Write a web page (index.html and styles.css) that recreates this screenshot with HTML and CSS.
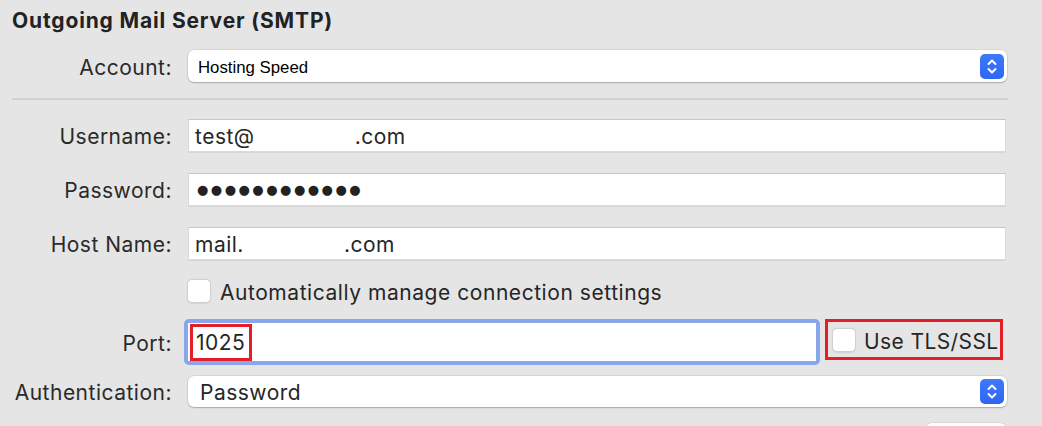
FILE: index.html
```html
<!DOCTYPE html>
<html>
<head>
<meta charset="utf-8">
<link rel="stylesheet" href="styles.css">
</head>
<body>
<div class="panel">
  <h1 class="title">Outgoing Mail Server (SMTP)</h1>

  <div class="row row-account">
    <label class="label">Account:</label>
    <div class="popup popup-small">
      <span class="popup-text">Hosting Speed</span>
      <span class="stepper">
        <svg width="12" height="17" viewBox="0 0 12 17"><path d="M2.5 6 L6 2.5 L9.5 6 M2.5 11 L6 14.5 L9.5 11" fill="none" stroke="#fff" stroke-width="2" stroke-linecap="round" stroke-linejoin="round"/></svg>
      </span>
    </div>
  </div>

  <div class="separator"></div>

  <div class="row row-field first">
    <label class="label">Username:</label>
    <div class="field"><span>test@</span><span class="blank w-user"></span><span>.com</span></div>
  </div>

  <div class="row row-field">
    <label class="label">Password:</label>
    <div class="field dots">●●●●●●●●●●●●</div>
  </div>

  <div class="row row-field">
    <label class="label">Host Name:</label>
    <div class="field"><span>mail.</span><span class="blank w-host"></span><span>.com</span></div>
  </div>

  <div class="row row-check">
    <span class="label"></span>
    <div class="check-line">
      <span class="checkbox"></span>
      <span class="check-text">Automatically manage connection settings</span>
    </div>
  </div>

  <div class="row row-port">
    <label class="label">Port:</label>
    <div class="port-ring">
      <div class="port-field"><span class="hl">1025</span></div>
    </div>
    <div class="tls">
      <span class="checkbox"></span>
      <span class="check-text">Use TLS/SSL</span>
    </div>
  </div>

  <div class="row row-auth">
    <label class="label">Authentication:</label>
    <div class="popup">
      <span class="popup-text big">Password</span>
      <span class="stepper">
        <svg width="12" height="17" viewBox="0 0 12 17"><path d="M2.5 6 L6 2.5 L9.5 6 M2.5 11 L6 14.5 L9.5 11" fill="none" stroke="#fff" stroke-width="2" stroke-linecap="round" stroke-linejoin="round"/></svg>
      </span>
    </div>
  </div>

  <div class="row row-buttons">
    <span class="button-stub"></span>
  </div>
</div>
</body>
</html>
```

FILE: styles.css
```css
html, body {
  margin: 0;
  padding: 0;
  background: #e5e5e5;
  overflow: hidden;
}

.panel {
  width: 1042px;
  height: 426px;
  box-sizing: border-box;
  padding: 9px 35px 0 12px;
  font-family: Inter, "Noto Sans", sans-serif;
  color: #262626;
  overflow: hidden;
}

.title {
  margin: 0;
  font-size: 21px;
  font-weight: 700;
  line-height: 24px;
  color: #222;
  letter-spacing: 0.85px;
}

.row {
  display: flex;
  align-items: center;
}

.label {
  width: 160px;
  flex: none;
  margin-right: 16px;
  padding-top: 3px;
  line-height: 24px;
  text-align: right;
  font-size: 21px;
  letter-spacing: 0.5px;
  color: #2a2a2a;
  white-space: nowrap;
}

.row-account {
  margin-top: 17px;
}

.popup {
  flex: 1;
  height: 32px;
  background: #fff;
  border-radius: 6px;
  box-shadow: 0 0 0 0.5px rgba(0,0,0,0.12), 0 1px 1.5px rgba(0,0,0,0.22);
  display: flex;
  align-items: center;
  justify-content: space-between;
  padding: 0 3px 0 10px;
}

.popup-text {
  font-family: "Liberation Sans", Arial, sans-serif;
  font-size: 16.8px;
  line-height: 20px;
  color: #000;
  padding-top: 3px;
}

.popup-text.big {
  font-family: Inter, "Noto Sans", sans-serif;
  font-size: 21px;
  line-height: 24px;
  letter-spacing: 0.5px;
  color: #262626;
  padding: 2px 0 0 2px;
}

.stepper {
  width: 24px;
  height: 25px;
  border-radius: 5px;
  background: linear-gradient(#3d7afa, #2f66f3);
  display: flex;
  align-items: center;
  justify-content: center;
}

.separator {
  height: 2px;
  background: #d2d2d2;
  margin: 16px 0 0 0;
  width: 996px;
}

.row-field {
  margin-top: 21px;
}

.row-field.first {
  margin-top: 19px;
}

.field {
  flex: 1;
  height: 33px;
  box-sizing: border-box;
  background: #fff;
  border: 1px solid #dadada;
  border-top-color: #c6c6c6;
  box-shadow: 0 1px 0 rgba(0,0,0,0.06);
  display: flex;
  align-items: center;
  padding: 3px 0 0 6px;
  font-size: 21px;
  line-height: 24px;
  letter-spacing: 0.5px;
  color: #262626;
  margin-right: 1px;
}

.blank {
  display: inline-block;
}

.w-user { width: 100px; }
.w-host { width: 100px; }

.dots {
  font-family: "DejaVu Sans", sans-serif;
  font-size: 13px;
  letter-spacing: 2.5px;
  padding: 1px 0 0 8px;
  color: #222;
}

.row-check {
  margin-top: 19px;
}

.check-line {
  display: flex;
  align-items: center;
  margin-left: -1px;
}

.checkbox {
  width: 22px;
  height: 22px;
  border-radius: 5px;
  background: #fff;
  border: 1px solid #d0d0d0;
  box-shadow: 0 0.5px 1px rgba(0,0,0,0.08);
  flex: none;
}

.check-text {
  font-size: 21px;
  line-height: 20px;
  letter-spacing: 0.55px;
  margin-left: 9px;
  padding-top: 4px;
  color: #262626;
  white-space: nowrap;
}

.row-port {
  margin-top: 16px;
}

.row-port .label {
  margin-right: 12px;
}

.port-ring {
  width: 636px;
  height: 46px;
  box-sizing: border-box;
  border: 4px solid #88a6ea;
  border-radius: 5px;
  background: #88a6ea;
  flex: none;
}

.port-field {
  height: 100%;
  background: #fff;
  display: flex;
  align-items: center;
  padding-left: 3px;
}

.hl {
  display: inline-block;
  border: 3px solid #e41e26;
  font-size: 21px;
  letter-spacing: 0.5px;
  line-height: 30px;
  padding: 1px 4px 0 3px;
  margin-left: -1px;
  color: #262626;
}

.tls {
  margin-left: 5px;
  width: 178px;
  height: 41px;
  box-sizing: border-box;
  border: 3px solid #e41e26;
  display: flex;
  align-items: center;
  padding-left: 4px;
  align-self: flex-start;
  flex: none;
}

.tls .check-text {
  margin-left: 8px;
  letter-spacing: 0.4px;
}

.row-auth {
  margin-top: 11px;
}

.row-auth .popup {
  height: 31px;
}

.row-buttons {
  justify-content: flex-end;
  margin-top: 16px;
  padding-right: 1px;
}

.button-stub {
  width: 80px;
  height: 20px;
  background: #fff;
  border-radius: 6px;
  box-shadow: 0 0 0 0.5px rgba(0,0,0,0.12);
}
```
